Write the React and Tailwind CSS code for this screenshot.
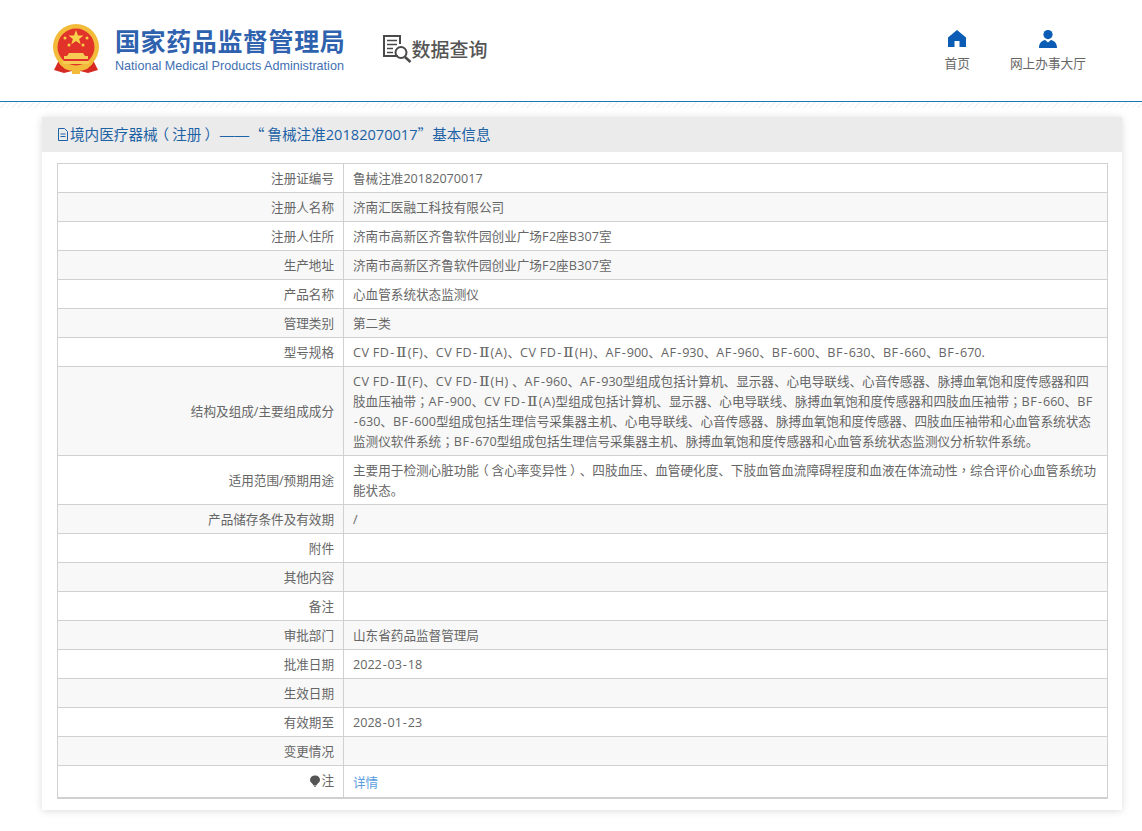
const rows = [
  ["注册证编号", "鲁械注准20182070017"],
  ["注册人名称", "济南汇医融工科技有限公司"],
  ["注册人住所", "济南市高新区齐鲁软件园创业广场F2座B307室"],
  ["生产地址", "济南市高新区齐鲁软件园创业广场F2座B307室"],
  ["产品名称", "心血管系统状态监测仪"],
  ["管理类别", "第二类"],
  ["型号规格", "CV FD-Ⅱ(F)、CV FD-Ⅱ(A)、CV FD-Ⅱ(H)、AF-900、AF-930、AF-960、BF-600、BF-630、BF-660、BF-670."],
  ["结构及组成/主要组成成分", "CV FD-Ⅱ(F)、CV FD-Ⅱ(H) 、AF-960、AF-930型组成包括计算机、显示器、心电导联线、心音传感器、脉搏血氧饱和度传感器和四\n肢血压袖带；AF-900、CV FD-Ⅱ(A)型组成包括计算机、显示器、心电导联线、脉搏血氧饱和度传感器和四肢血压袖带；BF-660、BF\n-630、BF-600型组成包括生理信号采集器主机、心电导联线、心音传感器、脉搏血氧饱和度传感器、四肢血压袖带和心血管系统状态\n监测仪软件系统；BF-670型组成包括生理信号采集器主机、脉搏血氧饱和度传感器和心血管系统状态监测仪分析软件系统。"],
  ["适用范围/预期用途", "主要用于检测心脏功能（含心率变异性）、四肢血压、血管硬化度、下肢血管血流障碍程度和血液在体流动性，综合评价心血管系统功\n能状态。"],
  ["产品储存条件及有效期", "/"],
  ["附件", ""],
  ["其他内容", ""],
  ["备注", ""],
  ["审批部门", "山东省药品监督管理局"],
  ["批准日期", "2022-03-18"],
  ["生效日期", ""],
  ["有效期至", "2028-01-23"],
  ["变更情况", ""],
];

function Rich({ text }) {
  return text.split(/(Ⅱ|；|，|（|）|“|”|—|-|[A-Z()]+)/).map((part, i) => {
    if (part === "Ⅱ") return <span key={i} className="inline-block w-[12.6px] scale-x-125 text-center font-['DejaVu_Serif',serif] leading-none">{part}</span>;
    if (part === "；" || part === "，") return <span key={i} className="font-['Noto_Sans_CJK_TC',sans-serif] leading-none">{part}</span>;
    if (part === "（") return <span key={i} className="inline-block -translate-x-[3px] font-['Noto_Sans_CJK_SC',sans-serif] leading-none">{part}</span>;
    if (part === "）") return <span key={i} className="inline-block translate-x-[3px] font-['Noto_Sans_CJK_SC',sans-serif] leading-none">{part}</span>;
    if (part === "“") return <span key={i} className="inline-block -translate-x-[3px] font-['Noto_Sans_CJK_SC',sans-serif] leading-none">{part}</span>;
    if (part === "”") return <span key={i} className="font-['Noto_Sans_CJK_SC',sans-serif] leading-none">{part}</span>;
    if (part === "—") return <span key={i} className="font-['Liberation_Sans',sans-serif] leading-none">{part}</span>;
    if (part === "-") return <span key={i} className="px-[0.85px]">{part}</span>;
    if (/^[A-Z()]+$/.test(part)) return <span key={i} className="tracking-[0.5px]">{part}</span>;
    return part;
  });
}

function Emblem() {
  return (
    <svg width="48" height="52" viewBox="0 0 48 52" className="shrink-0">
      <path d="M6 39 L2 47 L12 50 L24 47 L36 50 L46 47 L42 39 Z" fill="#d62a22" />
      <circle cx="24" cy="24" r="23" fill="#f2bb3a" />
      <circle cx="24" cy="24" r="18.5" fill="#e2332a" />
      <path d="M24 7 l2 5.4 5.6 .1 -4.5 3.4 1.6 5.4 -4.7 -3.2 -4.7 3.2 1.6 -5.4 -4.5 -3.4 5.6 -.1 Z" fill="#f8d24a" />
      <circle cx="13" cy="15" r="1.5" fill="#f8d24a" />
      <circle cx="35" cy="15" r="1.5" fill="#f8d24a" />
      <circle cx="17" cy="22" r="1.5" fill="#f8d24a" />
      <circle cx="31" cy="22" r="1.5" fill="#f8d24a" />
      <path d="M17 30 h14 l2 3 h3 v3 H12 v-3 h3 Z" fill="#f6cc55" />
      <path d="M6 33 Q10 44 24 44 Q38 44 42 33 L42 38 Q38 48 24 48 Q10 48 6 38 Z" fill="#f2bb3a" />
      <path d="M11 38 H37 V41 H11 Z" fill="#f6cc55" />
      <path d="M20 46 h8 v5 h-8 Z" fill="#f2bb3a" />
    </svg>
  );
}

function SearchDoc() {
  return (
    <svg width="30" height="30" viewBox="0 0 30 30" className="shrink-0" fill="none" stroke="#4a4a4a">
      <path d="M16 22 H2 V2 H18 V10" strokeWidth="2" />
      <path d="M5 6.5 H15 M5 10.5 H15 M5 14.5 H11 M5 18.5 H11" strokeWidth="1.6" />
      <circle cx="19" cy="18.5" r="5.5" strokeWidth="2" />
      <path d="M23 23 L28.5 28" strokeWidth="2.6" />
    </svg>
  );
}

function HomeIcon() {
  return (
    <svg width="18" height="17" viewBox="0 0 18 17">
      <path d="M9 0 L18 7.5 V17 H11.5 V11 H6.5 V17 H0 V7.5 Z" fill="#0b5cb5" />
    </svg>
  );
}

function UserIcon() {
  return (
    <svg width="18" height="18" viewBox="0 0 18 18">
      <circle cx="9" cy="4.6" r="4.6" fill="#0b5cb5" />
      <path d="M0 18 C0 13 2.5 10.8 6.2 10 L9 12.4 L11.8 10 C15.5 10.8 18 13 18 18 Z" fill="#0b5cb5" />
    </svg>
  );
}

function DocIcon() {
  return (
    <svg width="12" height="13" viewBox="0 0 12 13" fill="none" stroke="#1d62a5" strokeWidth="1" className="shrink-0">
      <path d="M1.5 .5 H7.5 L10.5 3.5 V12.5 H1.5 Z" />
      <path d="M3.5 6 H8.5 M3.5 8.5 H8.5" />
    </svg>
  );
}

function Bulb() {
  return (
    <svg width="10" height="13" viewBox="0 0 10 13" className="shrink-0">
      <path d="M5 .5 C8 .5 10 2.5 10 5 C10 7.5 7 8.5 6.5 10.5 H3.5 C3 8.5 0 7.5 0 5 C0 2.5 2 .5 5 .5 Z" fill="#555" />
      <path d="M4 11.5 H6" stroke="#888" strokeWidth="1" />
    </svg>
  );
}

const td = "border border-[#d0d0d0] px-[9px] pb-[3px] pt-[5px] align-middle text-[12.6px] leading-[20px] text-[#666]";

export default function App() {
  return (
    <div className="min-h-[831px] bg-white font-['Open_Sans','Noto_Sans_CJK_SC',sans-serif]">
      <header className="flex h-[101px] items-center pb-[3px] pl-[52px] pr-[56px]">
        <Emblem />
        <div className="ml-[15px] flex flex-col">
          <div className="font-['Noto_Sans_CJK_SC',sans-serif] text-[25px] font-bold leading-[30px] tracking-[0.6px] text-[#2f62ae]">
            国家药品监督管理局
          </div>
          <div className="mt-[4px] font-['Liberation_Sans',sans-serif] text-[12.6px] leading-[14px] text-[#3f6fb3]">
            National Medical Products Administration
          </div>
        </div>
        <div className="ml-[37px] flex items-center">
          <SearchDoc />
          <span className="-ml-px font-['Noto_Sans_CJK_SC',sans-serif] text-[19px] font-medium leading-[26px] text-[#555]">数据查询</span>
        </div>
        <nav className="ml-auto mt-[4px] flex items-start gap-[40px] text-[12.7px] leading-[18px] text-[#666]">
          <a className="flex flex-col items-center gap-[7px]">
            <HomeIcon />
            <span>首页</span>
          </a>
          <a className="flex flex-col items-center gap-[6px]">
            <UserIcon />
            <span>网上办事大厅</span>
          </a>
        </nav>
      </header>
      <div className="h-px bg-[#1e78b4]" />
      <div className="h-[6px] bg-[repeating-linear-gradient(135deg,#f0f4f7_0,#f0f4f7_1px,#ffffff_1px,#ffffff_4px)]" />
      <main className="pl-[42px] pr-[20px] pt-[9px] pb-[22px]">
        <section className="bg-white pb-[11px] shadow-[0_1px_8px_rgba(0,0,0,0.14)]">
          <h2 className="flex h-[35px] items-center gap-px bg-[#ebebeb] pl-[15px] text-[14.6px] font-normal text-[#1d62a5]">
            <DocIcon />
            <span className="whitespace-pre"><Rich text="境内医疗器械（注册） —— “鲁械注准20182070017”基本信息" /></span>
          </h2>
          <div className="pl-[15px] pr-[14px] pt-[11px]">
            <table className="w-full table-fixed border-collapse border-b-2 border-[#d0d0d0]">
              <colgroup>
                <col className="w-[286px]" />
                <col />
              </colgroup>
              <tbody>
                {rows.map(([k, v], i) => (
                  <tr key={k} className={i % 2 ? "bg-[#f8f8f8]" : "bg-white"}>
                    <td className={td + " text-right"}>{k}</td>
                    <td className={td + " whitespace-pre"}><Rich text={v} /></td>
                  </tr>
                ))}
                <tr className="bg-white">
                  <td className={td + " text-right"}>
                    <span className="inline-flex items-center justify-end gap-px">
                      <Bulb />
                      注
                    </span>
                  </td>
                  <td className="border border-[#d0d0d0] px-[9px] pb-[3px] pt-[7px] align-middle text-[12.6px] leading-[20px]">
                    <a className="text-[#5b9de0]">详情</a>
                  </td>
                </tr>
              </tbody>
            </table>
          </div>
        </section>
      </main>
    </div>
  );
}
